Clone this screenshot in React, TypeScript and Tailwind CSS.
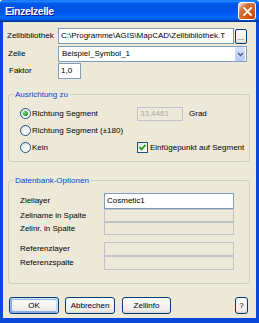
import React from 'react';

const BODY = 'bg-[#ECE9D8]';

function Edit({
  width,
  height = 16,
  value,
  disabled,
}: {
  width: number;
  height?: number;
  value?: string;
  disabled?: boolean;
}) {
  return (
    <div
      className={
        disabled
          ? 'flex items-center border border-[#BFC3C8] bg-[#ECE9D8] pl-[2px] leading-none text-[#ACA899]'
          : 'flex items-center border border-[#7F9DB9] bg-white pl-[2px] leading-none text-black'
      }
      style={{ width, height }}
    >
      {value}
    </div>
  );
}

function Radio({ checked }: { checked?: boolean }) {
  return (
    <span className="flex h-[11px] w-[11px] shrink-0 items-center justify-center rounded-full border border-[#1C5180] bg-[linear-gradient(135deg,#DCDCD7,#FFFFFF_70%)]">
      {checked && (
        <span className="h-[5px] w-[5px] rounded-full bg-[radial-gradient(circle_at_35%_35%,#6CE06A,#21A121_60%,#177A17)]" />
      )}
    </span>
  );
}

function Check() {
  return (
    <span className="flex h-[11px] w-[11px] shrink-0 items-center justify-center border border-[#1C5180] bg-[linear-gradient(135deg,#DCDCD7,#FFFFFF_70%)]">
      <svg width="9" height="9" viewBox="0 0 9 9" aria-hidden>
        <path d="M1.5 4.2L3.5 6.4L7.6 1.8" fill="none" stroke="#21A121" strokeWidth="1.8" />
      </svg>
    </span>
  );
}

function Button({
  width,
  label,
  primary,
}: {
  width: number;
  label: string;
  primary?: boolean;
}) {
  return (
    <div
      className={
        'flex h-[17px] items-center justify-center rounded-[3px] border border-[#003C74] bg-[linear-gradient(180deg,#FFFFFF,#ECEBE6_86%,#D6D0C5)] leading-none text-black ' +
        (primary
          ? 'shadow-[inset_-1px_1px_#CEE7FF,inset_1px_2px_#98B8EA,inset_-2px_2px_#BCD4F6,inset_1px_-1px_#89ADE4,inset_2px_-2px_#89ADE4]'
          : '')
      }
      style={{ width }}
    >
      {label}
    </div>
  );
}

function Group({
  title,
  height,
  children,
  className,
}: {
  title: string;
  height: number;
  children: React.ReactNode;
  className?: string;
}) {
  return (
    <div
      className={'relative ml-[5px] w-[242px] rounded-[3px] border border-[#D0D0BF] ' + (className ?? '')}
      style={{ height }}
    >
      <span className={`absolute left-[5px] top-[-6px] px-[1px] leading-[11px] text-[#0046D5] ${BODY}`}>
        {title}
      </span>
      {children}
    </div>
  );
}

export default function App() {
  return (
    <div className="flex h-[323px] w-[259px] flex-col rounded-t-[4px] bg-[#0A48D8] font-['Liberation_Sans',Arial,sans-serif] text-[8px] text-black">
      {/* title bar */}
      <div className="flex h-[22px] shrink-0 items-center justify-between rounded-t-[4px] bg-[linear-gradient(180deg,#0058EE_0%,#3593FF_4%,#288EFF_6%,#127DFF_8%,#036FFC_10%,#0262EE_14%,#0057E5_20%,#0054E3_24%,#0055EB_56%,#005BF5_66%,#026AFE_76%,#0062EF_86%,#0052D6_92%,#0040AB_94%,#003092_100%)] pl-[5px] pr-[3px]">
        <span className="text-[10.5px] font-bold leading-none tracking-[-0.4px] text-white [text-shadow:1px_1px_#0F1089]">
          Einzelzelle
        </span>
        <div className="flex h-[18px] w-[18px] items-center justify-center rounded-[3px] border border-white bg-[radial-gradient(circle_at_90%_90%,#CC4600_0%,#DC6527_55%,#CD7546_70%,#FFCCB2_90%,#FFFFFF_100%)]">
          <svg width="9" height="9" viewBox="0 0 9 9" aria-hidden>
            <path d="M1 1L8 8M8 1L1 8" stroke="white" strokeWidth="1.8" strokeLinecap="square" />
          </svg>
        </div>
      </div>

      {/* body */}
      <div className={`mx-[3px] mb-[5px] flex flex-1 flex-col pb-[4px] pt-[6px] ${BODY}`}>
        <div className="flex h-[16px] items-center">
          <span className="w-[55px] pl-[4px]">Zellbibliothek</span>
          <Edit width={176} value="C:\Programme\AGIS\MapCAD\Zellbibliothek.T" />
          <div className="ml-[1px] flex h-[15px] w-[12px] items-end justify-center rounded-[2px] border border-[#003C74] bg-[linear-gradient(180deg,#FFFFFF,#ECEBE6_86%,#D6D0C5)] pb-[2px] text-[7px] leading-none">
            ...
          </div>
        </div>

        <div className="mt-[2px] flex h-[16px] items-center">
          <span className="w-[55px] pl-[5px]">Zelle</span>
          <div className="flex h-[16px] w-[189px] items-center justify-between border border-[#7F9DB9] bg-white pl-[3px] pr-px leading-none">
            <span>Beispiel_Symbol_1</span>
            <div className="flex h-[14px] w-[10px] items-center justify-center rounded-[2px] bg-[linear-gradient(180deg,#D9E4FD,#B4C8F6)]">
              <svg width="7" height="5" viewBox="0 0 7 5" aria-hidden>
                <path d="M1 1L3.5 3.5L6 1" fill="none" stroke="#4D6185" strokeWidth="1.5" />
              </svg>
            </div>
          </div>
        </div>

        <div className="mt-px flex h-[16px] items-center">
          <span className="w-[55px] pl-[6px]">Faktor</span>
          <Edit width={23} value="1,0" />
        </div>

        <Group title="Ausrichtung zu" height={68} className="mt-[15px]">
          <div className="grid grid-cols-[117px_auto] auto-rows-[17px] items-center pl-[11px] pt-[10px]">
            <div className="flex items-center gap-px">
              <Radio checked />
              <span>Richtung Segment</span>
            </div>
            <div className="flex items-center">
              <Edit width={46} height={14} value="33,4461" disabled />
              <span className="ml-[6px]">Grad</span>
            </div>
            <div className="col-span-2 flex items-center gap-px">
              <Radio />
              <span>Richtung Segment (±180)</span>
            </div>
            <div className="flex items-center gap-px">
              <Radio />
              <span>Kein</span>
            </div>
            <div className="flex items-center gap-[2px]">
              <Check />
              <span>Einfügepunkt auf Segment</span>
            </div>
          </div>
        </Group>

        <Group title="Datenbank-Optionen" height={104} className="mt-[18px]">
          <div className="flex flex-col pl-[11px] pt-[12px]">
            <div className="flex h-[16px] items-center">
              <span className="w-[84px]">Ziellayer</span>
              <Edit width={130} value="Cosmetic1" />
            </div>
            <div className="flex h-[13px] items-center">
              <span className="w-[84px]">Zellname in Spalte</span>
              <Edit width={130} height={13} disabled />
            </div>
            <div className="flex h-[13px] items-center">
              <span className="w-[84px]">Zellnr. in Spalte</span>
              <Edit width={130} height={13} disabled />
            </div>
            <div className="mt-[7px] flex h-[14px] items-center">
              <span className="w-[84px]">Referenzlayer</span>
              <Edit width={130} height={14} disabled />
            </div>
            <div className="flex h-[14px] items-center">
              <span className="w-[84px]">Referenzspalte</span>
              <Edit width={130} height={14} disabled />
            </div>
          </div>
        </Group>

        <div className="mt-[13px] flex h-[17px] items-center pl-[6px] pr-[8px]">
          <Button width={50} label="OK" primary />
          <div className="ml-[6px]">
            <Button width={50} label="Abbrechen" />
          </div>
          <div className="ml-[7px]">
            <Button width={49} label="Zellinfo" />
          </div>
          <div className="ml-auto">
            <Button width={13} label="?" />
          </div>
        </div>
      </div>
    </div>
  );
}
